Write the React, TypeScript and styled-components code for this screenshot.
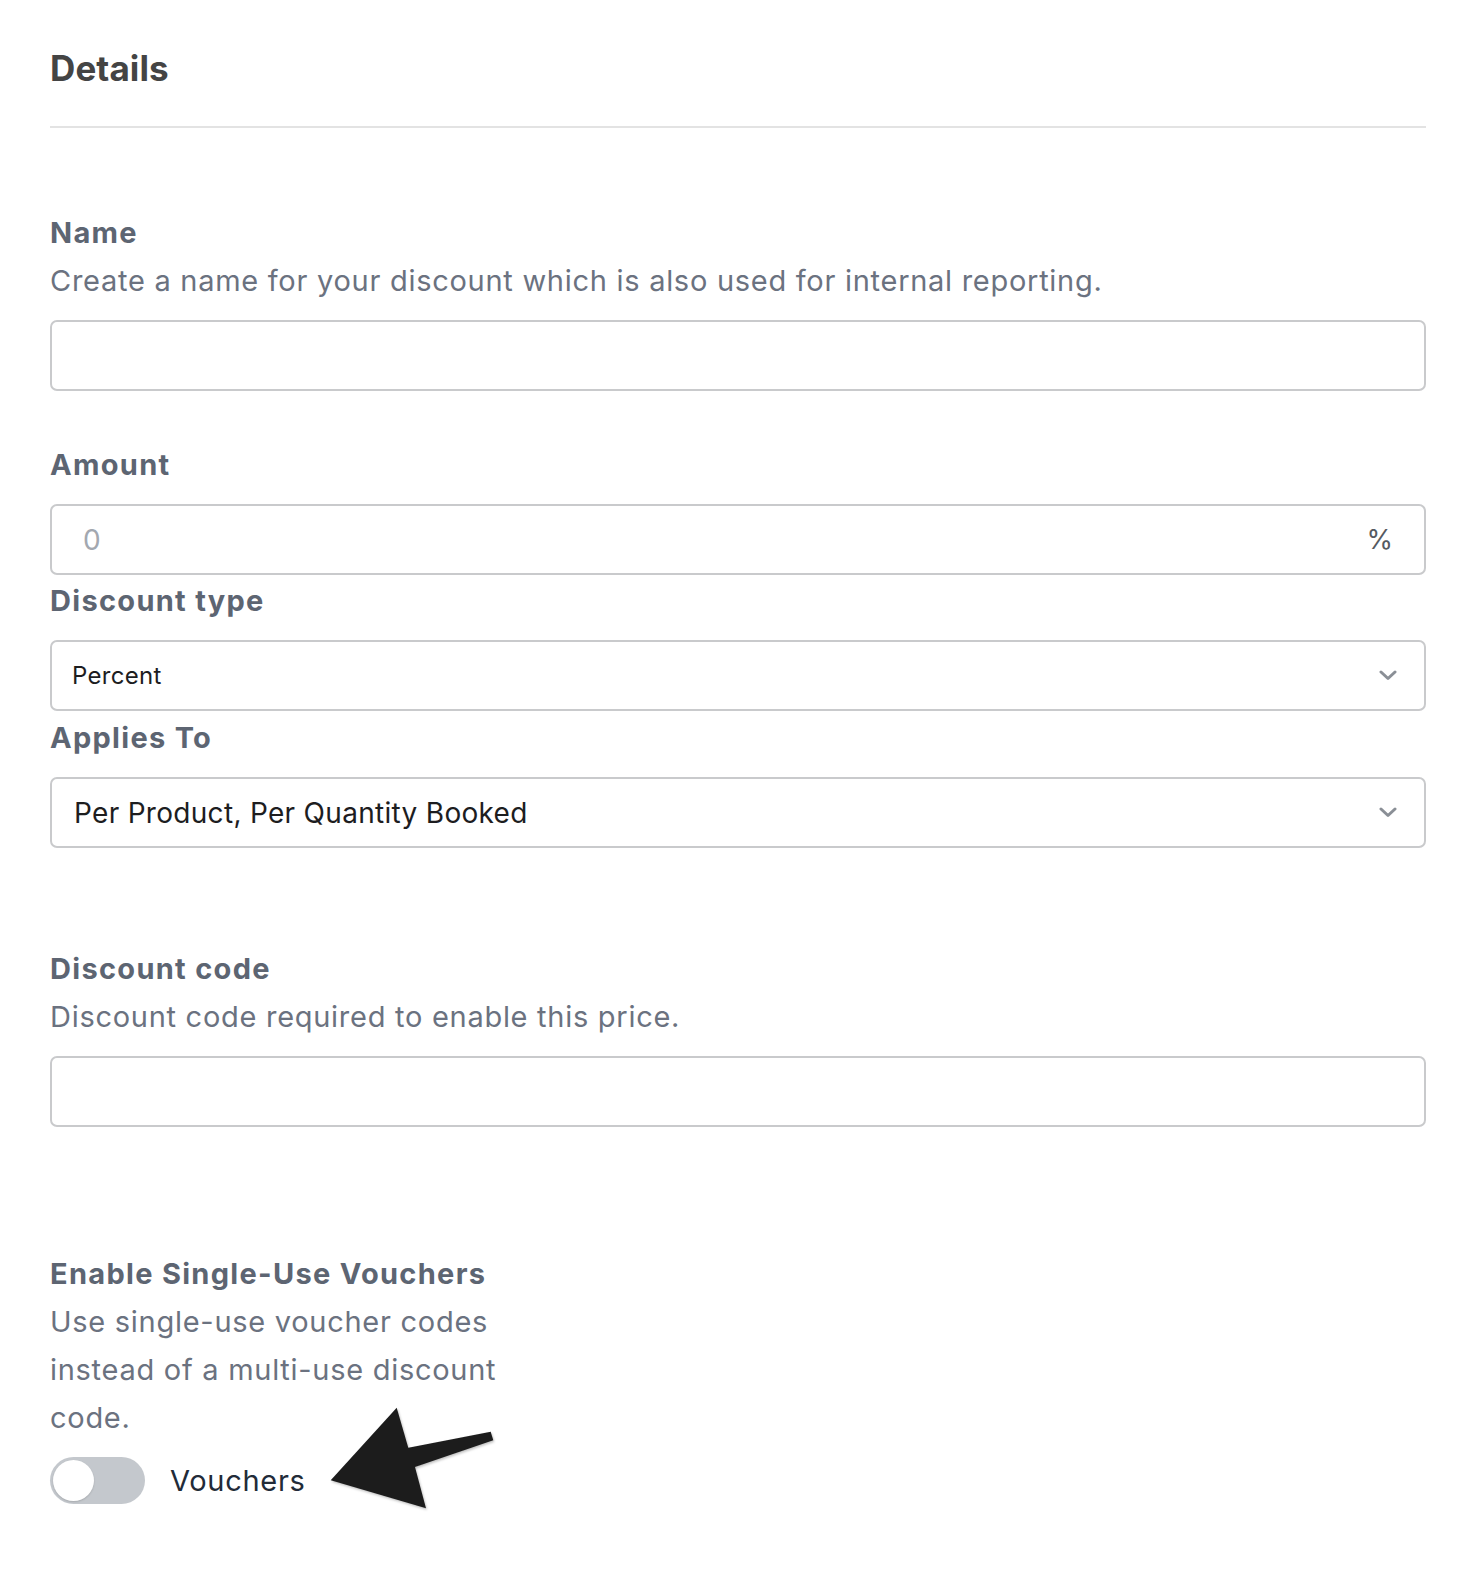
import React from "react";
import styled, { createGlobalStyle } from "styled-components";

const GlobalStyle = createGlobalStyle`
  html, body {
    margin: 0;
    padding: 0;
    background: #ffffff;
  }
  body {
    font-family: Inter, "Noto Sans", "Liberation Sans", sans-serif;
    -webkit-font-smoothing: antialiased;
  }
  * { box-sizing: border-box; }
`;

const Page = styled.main`
  width: 1376px;
  margin-left: 50px;
  padding-top: 47px;
  padding-bottom: 60px;
`;

const Header = styled.h2`
  margin: 0;
  font-size: 35px;
  line-height: 42px;
  font-weight: 700;
  color: #444444;
  letter-spacing: 0.1px;
`;

const Divider = styled.hr`
  margin: 37px 0 0 0;
  border: none;
  height: 2px;
  background: #e3e3e3;
`;

const Section = styled.section<{ $gap: number }>`
  margin-top: ${(p) => p.$gap}px;
  display: flex;
  flex-direction: column;
`;

const Label = styled.label`
  display: block;
  font-size: 29px;
  line-height: 44px;
  font-weight: 700;
  letter-spacing: 1.3px;
  color: #5d6572;
`;

const Help = styled.p<{ $narrow?: boolean }>`
  margin: 2px 0 0 0;
  font-size: 29px;
  line-height: 48px;
  font-weight: 400;
  letter-spacing: 0.72px;
  color: #6b7280;
  max-width: ${(p) => (p.$narrow ? "460px" : "none")};
`;

const Field = styled.div<{ $top: number }>`
  margin-top: ${(p) => p.$top}px;
  height: 71px;
  border: 2px solid #c9cacc;
  border-radius: 7px;
  background: #fff;
  display: flex;
  align-items: center;
`;

const TextInput = styled.input`
  flex: 1;
  height: 100%;
  border: none;
  outline: none;
  background: transparent;
  padding: 0 31px;
  font-family: inherit;
  font-size: 28px;
  color: #1f2937;
  &::placeholder {
    color: #a3a8b0;
  }
`;

const Suffix = styled.span`
  padding-right: 31px;
  font-size: 27px;
  color: #555a61;
`;

const SelectValue = styled.span<{ $size: number; $pad: number }>`
  flex: 1;
  padding-left: ${(p) => p.$pad}px;
  font-size: ${(p) => p.$size}px;
  color: #1d1d1f;
  letter-spacing: 0.3px;
`;

const Chevron = styled.svg`
  margin-right: 27px;
  width: 18px;
  height: 11px;
`;

const ToggleRow = styled.div`
  position: relative;
  margin-top: 15px;
  display: flex;
  align-items: center;
  gap: 25px;
  height: 47px;
`;

const Switch = styled.button`
  width: 95px;
  height: 47px;
  border: none;
  border-radius: 24px;
  background: #c4c8cd;
  padding: 3px;
  display: flex;
  align-items: center;
  cursor: pointer;
`;

const Knob = styled.span`
  width: 41px;
  height: 41px;
  border-radius: 50%;
  background: #ffffff;
  box-shadow: 0 1px 2px rgba(0, 0, 0, 0.15);
`;

const SwitchLabel = styled.span`
  font-size: 29px;
  letter-spacing: 0.7px;
  color: #222b38;
`;

const Annotation = styled.svg`
  position: absolute;
  left: 275px;
  top: -56px;
  width: 175px;
  height: 115px;
  overflow: visible;
`;

const ChevronIcon = () => (
  <Chevron viewBox="0 0 18 11" fill="none">
    <path d="M2 2 L9 8.5 L16 2" stroke="#8a8f96" strokeWidth="3" strokeLinecap="round" strokeLinejoin="round" />
  </Chevron>
);

export default function App() {
  return (
    <>
      <GlobalStyle />
      <Page>
        <Header>Details</Header>
        <Divider />

        <Section $gap={83}>
          <Label>Name</Label>
          <Help>Create a name for your discount which is also used for internal reporting.</Help>
          <Field $top={15}>
            <TextInput type="text" />
          </Field>
        </Section>

        <Section $gap={52}>
          <Label>Amount</Label>
          <Field $top={17}>
            <TextInput type="text" placeholder="0" />
            <Suffix>%</Suffix>
          </Field>
        </Section>

        <Section $gap={4}>
          <Label>Discount type</Label>
          <Field $top={17}>
            <SelectValue $size={24} $pad={20}>Percent</SelectValue>
            <ChevronIcon />
          </Field>
        </Section>

        <Section $gap={5}>
          <Label>Applies To</Label>
          <Field $top={17}>
            <SelectValue $size={28} $pad={22}>Per Product, Per Quantity Booked</SelectValue>
            <ChevronIcon />
          </Field>
        </Section>

        <Section $gap={99}>
          <Label>Discount code</Label>
          <Help>Discount code required to enable this price.</Help>
          <Field $top={15}>
            <TextInput type="text" />
          </Field>
        </Section>

        <Section $gap={125}>
          <Label>Enable Single-Use Vouchers</Label>
          <Help $narrow>Use single-use voucher codes instead of a multi-use discount code.</Help>
          <ToggleRow>
            <Switch type="button" role="switch" aria-checked={false}>
              <Knob />
            </Switch>
            <SwitchLabel>Vouchers</SwitchLabel>
            <Annotation viewBox="0 0 175 115">
              <defs>
                <filter id="arrowShadow" x="-10%" y="-10%" width="130%" height="130%">
                  <feDropShadow dx="1" dy="1.5" stdDeviation="1.2" floodColor="#000" floodOpacity="0.25" />
                </filter>
              </defs>
              <polygon
                points="5.7,79.3 71.7,6.7 83.3,46.7 165.7,30.7 168.3,39.3 90,66 101,107.3"
                fill="#1e1e1e"
                filter="url(#arrowShadow)"
              />
            </Annotation>
          </ToggleRow>
        </Section>
      </Page>
    </>
  );
}
